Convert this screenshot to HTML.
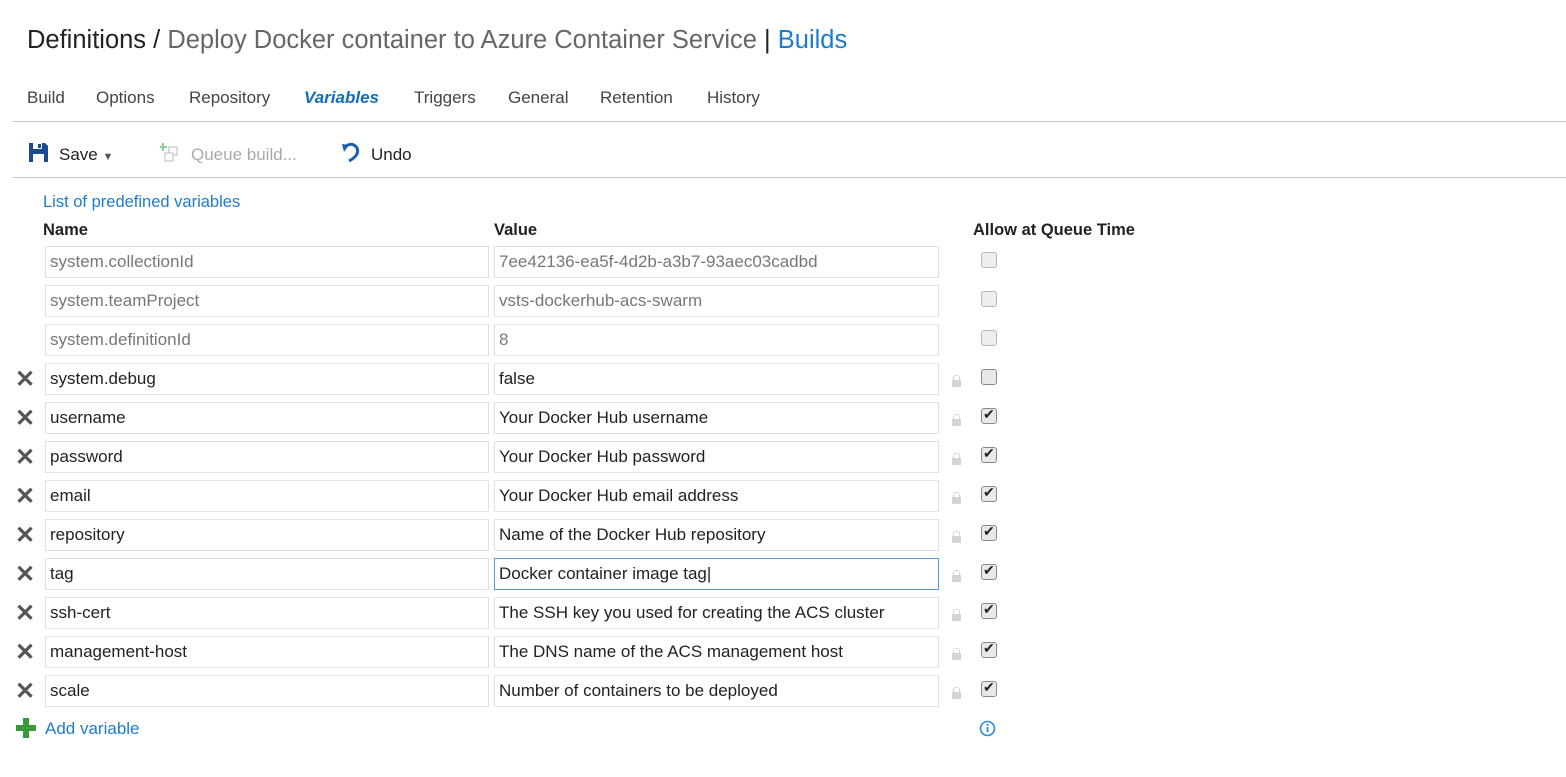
<!DOCTYPE html>
<html><head><style>
body{margin:0;width:1566px;height:777px;background:#fff;font-family:"Liberation Sans",sans-serif;color:#222;position:relative;overflow:hidden}
.a{position:absolute;white-space:nowrap}
.title{left:27px;top:26px;font-size:25.5px;color:#222}
.tab{top:88px;font-size:17px;color:#444}
.hr{position:absolute;left:12px;right:0;height:1px;background:#c8c8c8}
.inp{position:absolute;height:32px;border:1px solid #e0e0e0;box-sizing:border-box;font-size:17px;line-height:30px;padding-left:4px;color:#222;background:#fff}
.ro{color:#777}
.cb{position:absolute;left:981px;width:16px;height:16px;border:1px solid #8a8a8a;border-radius:3px;box-sizing:border-box;background:#e8e8e8}
.cb.ro2{border-color:#b8b8b8;background:#eee}
.x{position:absolute;left:15px;font-size:24px;color:#555;font-weight:bold;line-height:20px}
.lock{position:absolute;left:952px;width:9px;height:7px;background:#d4d4d4}
.lock:before{content:"";position:absolute;left:1px;top:-5px;width:5px;height:5px;border:1px solid #d4d4d4;border-bottom:none;border-radius:3px 3px 0 0}
</style></head><body>
<div class="a title">Definitions / <span style="color:#666">Deploy Docker container to Azure Container Service</span> | <span style="color:#1e7ccf">Builds</span></div>
<div class="a tab" style="left:27px">Build</div>
<div class="a tab" style="left:96px">Options</div>
<div class="a tab" style="left:189px">Repository</div>
<div class="a tab" style="left:304px;color:#106ebe;font-weight:bold;font-style:italic">Variables</div>
<div class="a tab" style="left:414px">Triggers</div>
<div class="a tab" style="left:508px">General</div>
<div class="a tab" style="left:600px">Retention</div>
<div class="a tab" style="left:707px">History</div>
<div class="hr" style="top:121px"></div>
<svg class="a" style="left:29px;top:143px" width="19" height="19" viewBox="0 0 19 19"><path d="M0 0h16l3 3v16H0z" fill="#1a4a8a"/><rect x="4" y="0" width="9" height="6" fill="#fff"/><rect x="9" y="1" width="3" height="4" fill="#1a4a8a"/><rect x="4" y="11" width="11" height="8" fill="#fff"/></svg>
<div class="a" style="left:59px;top:145px;font-size:17px">Save <span style="font-size:11px;color:#555">▼</span></div>
<svg class="a" style="left:160px;top:142px" width="22" height="22" viewBox="0 0 22 22"><path d="M3 1v8M-1 5h8" stroke="#8fce8f" stroke-width="2"/><rect x="9" y="5" width="8" height="8" fill="none" stroke="#bbb"/><rect x="5" y="11" width="8" height="8" fill="#fff" stroke="#bbb"/></svg>
<div class="a" style="left:191px;top:145px;font-size:17px;color:#aaa">Queue build...</div>
<svg class="a" style="left:340px;top:142px" width="22" height="22" viewBox="0 0 22 22"><path d="M5 5 Q12 -1 17 6 Q20 13 9 19" fill="none" stroke="#1a5fa8" stroke-width="3"/><path d="M2 2 L9 3 L4 10 Z" fill="#1a5fa8"/></svg>
<div class="a" style="left:371px;top:145px;font-size:17px">Undo</div>
<div class="hr" style="top:177px"></div>
<div class="a" style="left:43px;top:193px;font-size:16.5px;color:#1e7ccf">List of predefined variables</div>
<div class="a" style="left:43px;top:221px;font-size:16.5px;font-weight:bold">Name</div>
<div class="a" style="left:494px;top:221px;font-size:16.5px;font-weight:bold">Value</div>
<div class="a" style="left:973px;top:221px;font-size:16.5px;font-weight:bold">Allow at Queue Time</div>
<div id="rows"></div>
<script>
var R=[["system.collectionId","7ee42136-ea5f-4d2b-a3b7-93aec03cadbd",2],["system.teamProject","vsts-dockerhub-acs-swarm",2],["system.definitionId","8",2],["system.debug","false",0],["username","Your Docker Hub username",1],["password","Your Docker Hub password",1],["email","Your Docker Hub email address",1],["repository","Name of the Docker Hub repository",1],["tag","Docker container image tag|",1],["ssh-cert","The SSH key you used for creating the ACS cluster",1],["management-host","The DNS name of the ACS management host",1],["scale","Number of containers to be deployed",1]];
var h="";R.forEach(function(r,i){var y=246+i*39;var ro=r[2]==2;
h+='<div class="inp'+(ro?' ro':'')+'" style="left:45px;top:'+y+'px;width:444px">'+r[0]+'</div>';
var st=i==8?'border-color:#5a9ae0;':'';
h+='<div class="inp'+(ro?' ro':'')+'" style="'+st+'left:494px;top:'+y+'px;width:445px">'+r[1].replace('|','<span style="font-weight:100">|</span>')+'</div>';
h+='<div class="cb'+(ro?' ro2':'')+'" style="top:'+(y+6)+'px">'+(r[2]==1?'<span style="position:absolute;left:1px;top:-3px;font-size:14px;color:#222">✔</span>':'')+'</div>';
if(!ro){h+='<div class="x" style="top:'+(y+7)+'px">✕</div><div class="lock" style="top:'+(y+17)+'px"></div>';}
});document.getElementById("rows").innerHTML=h;
</script>
<svg class="a" style="left:16px;top:718px" width="20" height="20" viewBox="0 0 20 20"><path d="M7 0h6v7h7v6h-7v7H7v-7H0V7h7z" fill="#3a9a3a"/></svg>
<div class="a" style="left:45px;top:719px;font-size:17px;color:#1e7ccf">Add variable</div>
<svg class="a" style="left:979px;top:720px" width="17" height="17" viewBox="0 0 17 17"><circle cx="8.5" cy="8.5" r="7" fill="none" stroke="#2a8ae0" stroke-width="1.6"/><rect x="7.7" y="7" width="1.8" height="5" fill="#2a8ae0"/><rect x="7.7" y="4" width="1.8" height="1.8" fill="#2a8ae0"/></svg>
</body></html>
